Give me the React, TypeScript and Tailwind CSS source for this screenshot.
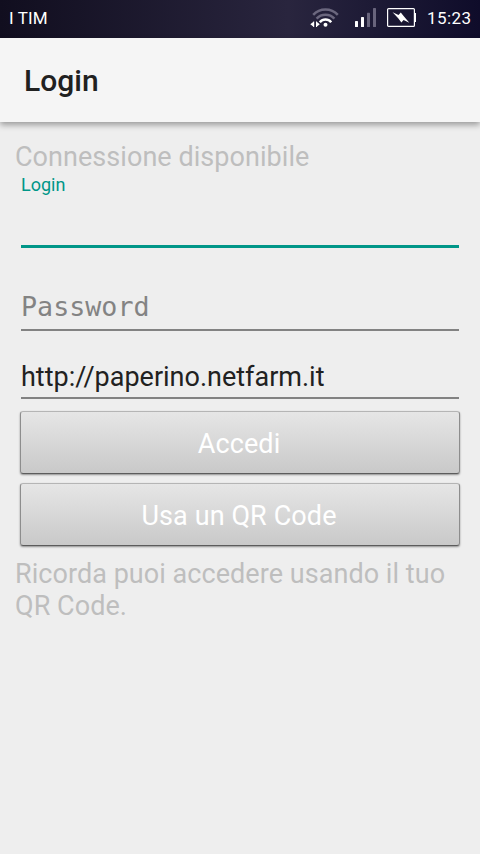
import React, { useState } from "react";

function WifiIcon() {
	return (
		<svg width="30" height="20" viewBox="0 0 30 20" fill="none">
			<g stroke="#6b677e" strokeWidth="2.5">
				<path d="M3.2 6.8C9.8 -.4 21.2 -.4 27.8 6.8" />
				<path d="M6.6 10.6C11.3 5.4 19.7 5.4 24.4 10.6" />
			</g>
			<path d="M9.8 14.2C12.8 10.6 18.2 10.6 21.2 14.2" stroke="#fff" strokeWidth="2.5" />
			<circle cx="15.5" cy="16.7" r="2" fill="#fff" />
			<path d="M.3 16.2 3.2 14V13.4H4.2V19H3.2V18.4ZM9.8 16.2 7 14V13.4H6V19H7V18.4Z" fill="#fff" />
		</svg>
	);
}

function SignalIcon() {
	return (
		<svg width="21" height="19" viewBox="0 0 21 19">
			<rect x="0" y="13" width="3" height="6" rx=".6" fill="#fff" />
			<rect x="6" y="9" width="3" height="10" rx=".6" fill="#fff" />
			<rect x="12" y="4.7" width="3" height="14.3" rx=".6" fill="#68647c" />
			<rect x="18" y="0" width="3" height="19" rx=".6" fill="#68647c" />
		</svg>
	);
}

function BatteryIcon() {
	return (
		<svg width="29" height="19" viewBox="0 0 29 19" fill="none">
			<rect x=".6" y=".6" width="26.8" height="17.8" rx="1" stroke="#fff" strokeWidth="1.2" />
			<path d="M28 5h1v9h-1z" fill="#fff" />
			<path d="M5.6 4.3 11.5 6.9 13.8 4.4 17 8.6 22.3 14.7 16.6 12.1 14.4 14.5 11.2 10.2Z" fill="#fff" />
		</svg>
	);
}

function StatusBar() {
	return (
		<div className="flex h-[38px] shrink-0 justify-between bg-linear-to-r from-[#110e1f] via-[#29253e] via-60% to-[#0f0c2a] px-[9px] text-[17px] leading-[36px] text-white">
			<span className="tracking-[0.1px]">I TIM</span>
			<div className="flex">
				<div className="mr-[15px] pt-[8px]">
					<WifiIcon />
				</div>
				<div className="mr-[11px] pt-[8px]">
					<SignalIcon />
				</div>
				<div className="mr-[11px] pt-[8px]">
					<BatteryIcon />
				</div>
				<span className="-mr-[0.4px] tracking-[0.4px]">15:23</span>
			</div>
		</div>
	);
}

interface ActionButtonProps {
	children: React.ReactNode;
}

function ActionButton({ children }: ActionButtonProps) {
	return (
		<button
			type="button"
			className="h-[63px] w-full rounded-[3px] border border-t-[#b5b5b5] border-x-[#8d8d8d] border-b-[#5c5c5c] bg-linear-to-b from-[#e6e6e6] to-[#c9c9c9] pr-[2px] pt-[3px] tracking-[0.1px] text-white shadow-[0_1px_2px_rgba(0,0,0,0.4)]"
		>
			{children}
		</button>
	);
}

export default function App() {
	const [login, setLogin] = useState("");
	const [password, setPassword] = useState("");
	const [server, setServer] = useState("http://paperino.netfarm.it");

	return (
		<div className="flex h-[854px] w-[480px] flex-col overflow-hidden bg-[#eeeeee] font-[Roboto,sans-serif] text-[27px] leading-[32px]">
			<StatusBar />
			<header className="z-10 flex h-[84px] shrink-0 items-center bg-[#f5f5f5] pl-6 pt-[2px] shadow-[0_3px_6px_rgba(0,0,0,0.35)]">
				<h1 className="text-[30px] font-medium text-[#212121]">Login</h1>
			</header>
			<main className="flex flex-col px-[15px] pt-[19px]">
				<p className="tracking-[0.05px] text-[#bebebe]">Connessione disponibile</p>
				<form className="flex flex-col px-[6px]" onSubmit={(e) => e.preventDefault()}>
					<label htmlFor="login" className="text-[18px] leading-[24px] text-[#009688]">
						Login
					</label>
					<input
						id="login"
						value={login}
						onChange={(e) => setLogin(e.target.value)}
						className="h-[51px] border-b-3 border-[#009688] outline-none"
					/>
					<input
						type="password"
						placeholder="Password"
						value={password}
						onChange={(e) => setPassword(e.target.value)}
						className="mt-[34px] h-[49px] border-b-2 border-[#828282] pt-[2px] font-['DejaVu_Sans_Mono',monospace] text-[26.7px] outline-none placeholder:text-[#838383]"
					/>
					<input
						value={server}
						onChange={(e) => setServer(e.target.value)}
						className="mt-[22px] h-[46px] border-b-2 border-[#828282] pt-[4px] text-[#212121] outline-none"
					/>
					<div className="-mx-px mt-3 flex flex-col gap-[9px]">
						<ActionButton>Accedi</ActionButton>
						<ActionButton>Usa un QR Code</ActionButton>
					</div>
				</form>
				<p className="mt-3 tracking-[0.05px] text-[#bebebe]">Ricorda puoi accedere usando il tuo QR Code.</p>
			</main>
		</div>
	);
}
